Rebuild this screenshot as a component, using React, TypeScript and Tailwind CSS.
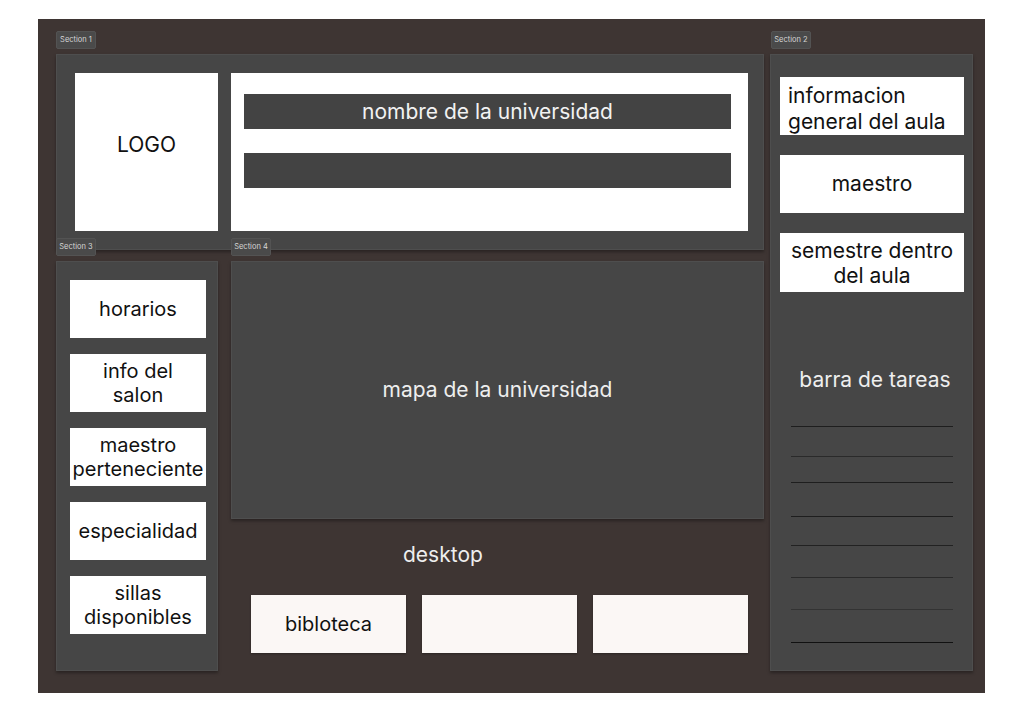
const sideItems = [
  { lines: ['horarios'] },
  { lines: ['info del', 'salon'] },
  { lines: ['maestro', 'perteneciente'] },
  { lines: ['especialidad'] },
  { lines: ['sillas', 'disponibles'] },
]

function Label({ children }: { children: React.ReactNode }) {
  return (
    <div className="h-[18px] w-[40px] flex items-center justify-center rounded-[2px] bg-[#4a4a4a] border border-[#535353] text-[7.5px] leading-none text-[#d6d6d6]">
      {children}
    </div>
  )
}

const panel =
  'bg-[#464646] border border-[#4e4e4e] shadow-[0_2px_3px_rgba(0,0,0,0.35)]'

export default function App() {
  return (
    <div
      className="min-h-screen bg-white pt-[19px] pl-[38px]"
      style={{ fontFamily: 'Inter, "Noto Sans", sans-serif' }}
    >
      <div className="w-[947px] h-[674px] bg-[#3e3533] flex pl-[18px] pt-[12px]">
        {/* Left column: sections 1, 3, 4 */}
        <div className="w-[708px] flex flex-col">
          <Label>Section 1</Label>
          <div className={`mt-[5px] h-[196px] flex pl-[18px] pt-[18px] gap-[13px] ${panel}`}>
            <div className="w-[143px] h-[158px] bg-white flex items-center justify-center pb-[14px] text-[21px] text-[#111]">
              LOGO
            </div>
            <div className="w-[517px] h-[158px] bg-white pl-[13px] pt-[21px]">
              <div className="w-[487px] h-[35px] bg-[#434343] flex items-center justify-center text-[21px] text-[#f2f2f2]">
                nombre de la universidad
              </div>
              <div className="mt-[24px] w-[487px] h-[35px] bg-[#434343]" />
            </div>
          </div>

          <div className="-mt-[12px] flex gap-[13px]">
            {/* Section 3 */}
            <div className="w-[162px] flex flex-col">
              <Label>Section 3</Label>
              <div className={`mt-[5px] h-[410px] pl-[13px] pt-[18px] flex flex-col gap-[16px] ${panel}`}>
                {sideItems.map((item) => (
                  <div
                    key={item.lines.join(' ')}
                    className="w-[136px] h-[58px] bg-white flex flex-col items-center justify-center text-center text-[20px] leading-[24px] text-[#111]"
                  >
                    {item.lines.map((l) => (
                      <span key={l} className="whitespace-nowrap">{l}</span>
                    ))}
                  </div>
                ))}
              </div>
            </div>

            {/* Section 4 */}
            <div className="w-[533px] flex flex-col">
              <Label>Section 4</Label>
              <div className={`mt-[5px] h-[258px] flex items-center justify-center text-[21px] text-[#eeeeee] ${panel}`}>
                mapa de la universidad
              </div>
              <div className="mt-[24px] pl-[172px] text-[21px] leading-[24px] text-[#eeeeee]">desktop</div>
              <div className="mt-[28px] pl-[20px] flex gap-[16px]">
                <div className="w-[155px] h-[58px] bg-[#fbf7f5] shadow-[0_1px_2px_rgba(0,0,0,0.3)] flex items-center justify-center text-[20px] text-[#111]">
                  bibloteca
                </div>
                <div className="w-[155px] h-[58px] bg-[#fbf7f5] shadow-[0_1px_2px_rgba(0,0,0,0.3)]" />
                <div className="w-[155px] h-[58px] bg-[#fbf7f5] shadow-[0_1px_2px_rgba(0,0,0,0.3)]" />
              </div>
            </div>
          </div>
        </div>

        {/* Right column: section 2 */}
        <div className="ml-[6px] w-[203px] flex flex-col">
          <div className="ml-[1px]">
            <Label>Section 2</Label>
          </div>
          <div className={`mt-[5px] h-[617px] pl-[9px] pt-[22px] flex flex-col ${panel}`}>
            <div className="w-[184px] h-[58px] bg-white pl-[8px] pt-[6px] text-[21px] leading-[26px] text-[#111]">
              informacion general del aula
            </div>
            <div className="mt-[20px] w-[184px] h-[58px] bg-white flex items-center justify-center text-[21px] text-[#111]">
              maestro
            </div>
            <div className="mt-[20px] w-[184px] h-[59px] bg-white flex flex-col items-center justify-center text-center text-[21px] leading-[25px] text-[#111]">
              <span className="whitespace-nowrap">semestre dentro</span>
              <span>del aula</span>
            </div>
            <div className="mt-[76px] w-[184px] pl-[6px] text-center text-[21px] leading-[24px] text-[#eeeeee]">
              barra de tareas
            </div>
            <div className="ml-[11px] w-[162px] flex flex-col">
              <div className="mt-[34px] h-px bg-[#1e1e1e]" />
              <div className="mt-[29px] h-px bg-[#2a2a2a]" />
              <div className="mt-[25px] h-px bg-[#1e1e1e]" />
              <div className="mt-[33px] h-px bg-[#1e1e1e]" />
              <div className="mt-[28px] h-px bg-[#222222]" />
              <div className="mt-[31px] h-px bg-[#2a2a2a]" />
              <div className="mt-[31px] h-px bg-[#333333]" />
              <div className="mt-[32px] h-px bg-[#111111]" />
            </div>
          </div>
        </div>
      </div>
    </div>
  )
}
